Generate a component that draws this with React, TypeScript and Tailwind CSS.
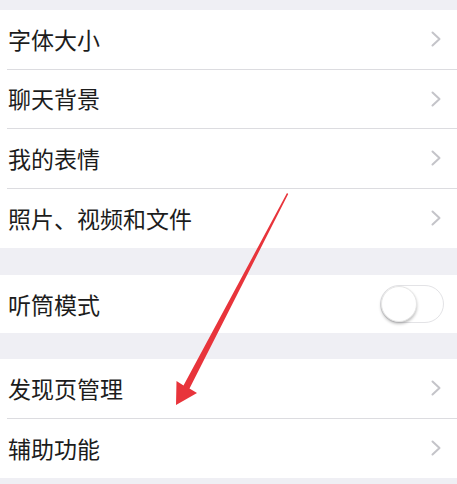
import React from "react";

const font = { fontFamily: '"Noto Sans CJK SC", "Noto Sans", sans-serif' };

function Chevron() {
  return (
    <svg width="10" height="16" viewBox="0 0 10 16" className="shrink-0">
      <polyline points="1.5,1.5 8.5,8 1.5,14.5" fill="none" stroke="#c4c4c9" strokeWidth="2" strokeLinecap="round" strokeLinejoin="round" />
    </svg>
  );
}

function Row({ label, last, h = "h-[59.5px]" }: { label: string; last?: boolean; h?: string }) {
  return (
    <div className={`${h} bg-white flex flex-col`}>
      <div className="flex-1 flex items-center justify-between pl-[8px] pr-[16px]">
        <span className="text-[23px] text-[#1c1c1c] leading-none" style={font}>{label}</span>
        <Chevron />
      </div>
      {!last && <div className="ml-[7px] h-px bg-[#dcdce0]" />}
    </div>
  );
}

export default function App() {
  return (
    <div className="relative w-[457px] h-[484px] bg-[#efeff4] overflow-hidden">
      <div className="pt-[10px] flex flex-col">
        <div className="flex flex-col">
          <Row label="字体大小" />
          <Row label="聊天背景" />
          <Row label="我的表情" />
          <Row label="照片、视频和文件" last />
        </div>
        <div className="h-[27px]" />
        <div className="h-[58px] bg-white flex items-center justify-between pl-[8px] pr-[13px]">
          <span className="text-[23px] text-[#1c1c1c] leading-none" style={font}>听筒模式</span>
          <div className="w-[64px] h-[38px] rounded-full border border-[#e3e3e6] bg-white flex items-center">
            <div className="w-[36px] h-[36px] rounded-full bg-white border border-[#e6e6e6] shadow-[0_2px_3px_rgba(0,0,0,0.25)]" />
          </div>
        </div>
        <div className="h-[26px]" />
        <div className="flex flex-col">
          <Row label="发现页管理" />
          <Row label="辅助功能" last />
        </div>
      </div>
      <svg className="absolute inset-0 pointer-events-none" width="457" height="484" viewBox="0 0 457 484">
        <polygon
          points="287,193 288.2,194 189.5,388.5 197,393 176,405 176.5,381 183.5,385.5"
          fill="#e8343b"
        />
      </svg>
    </div>
  );
}
